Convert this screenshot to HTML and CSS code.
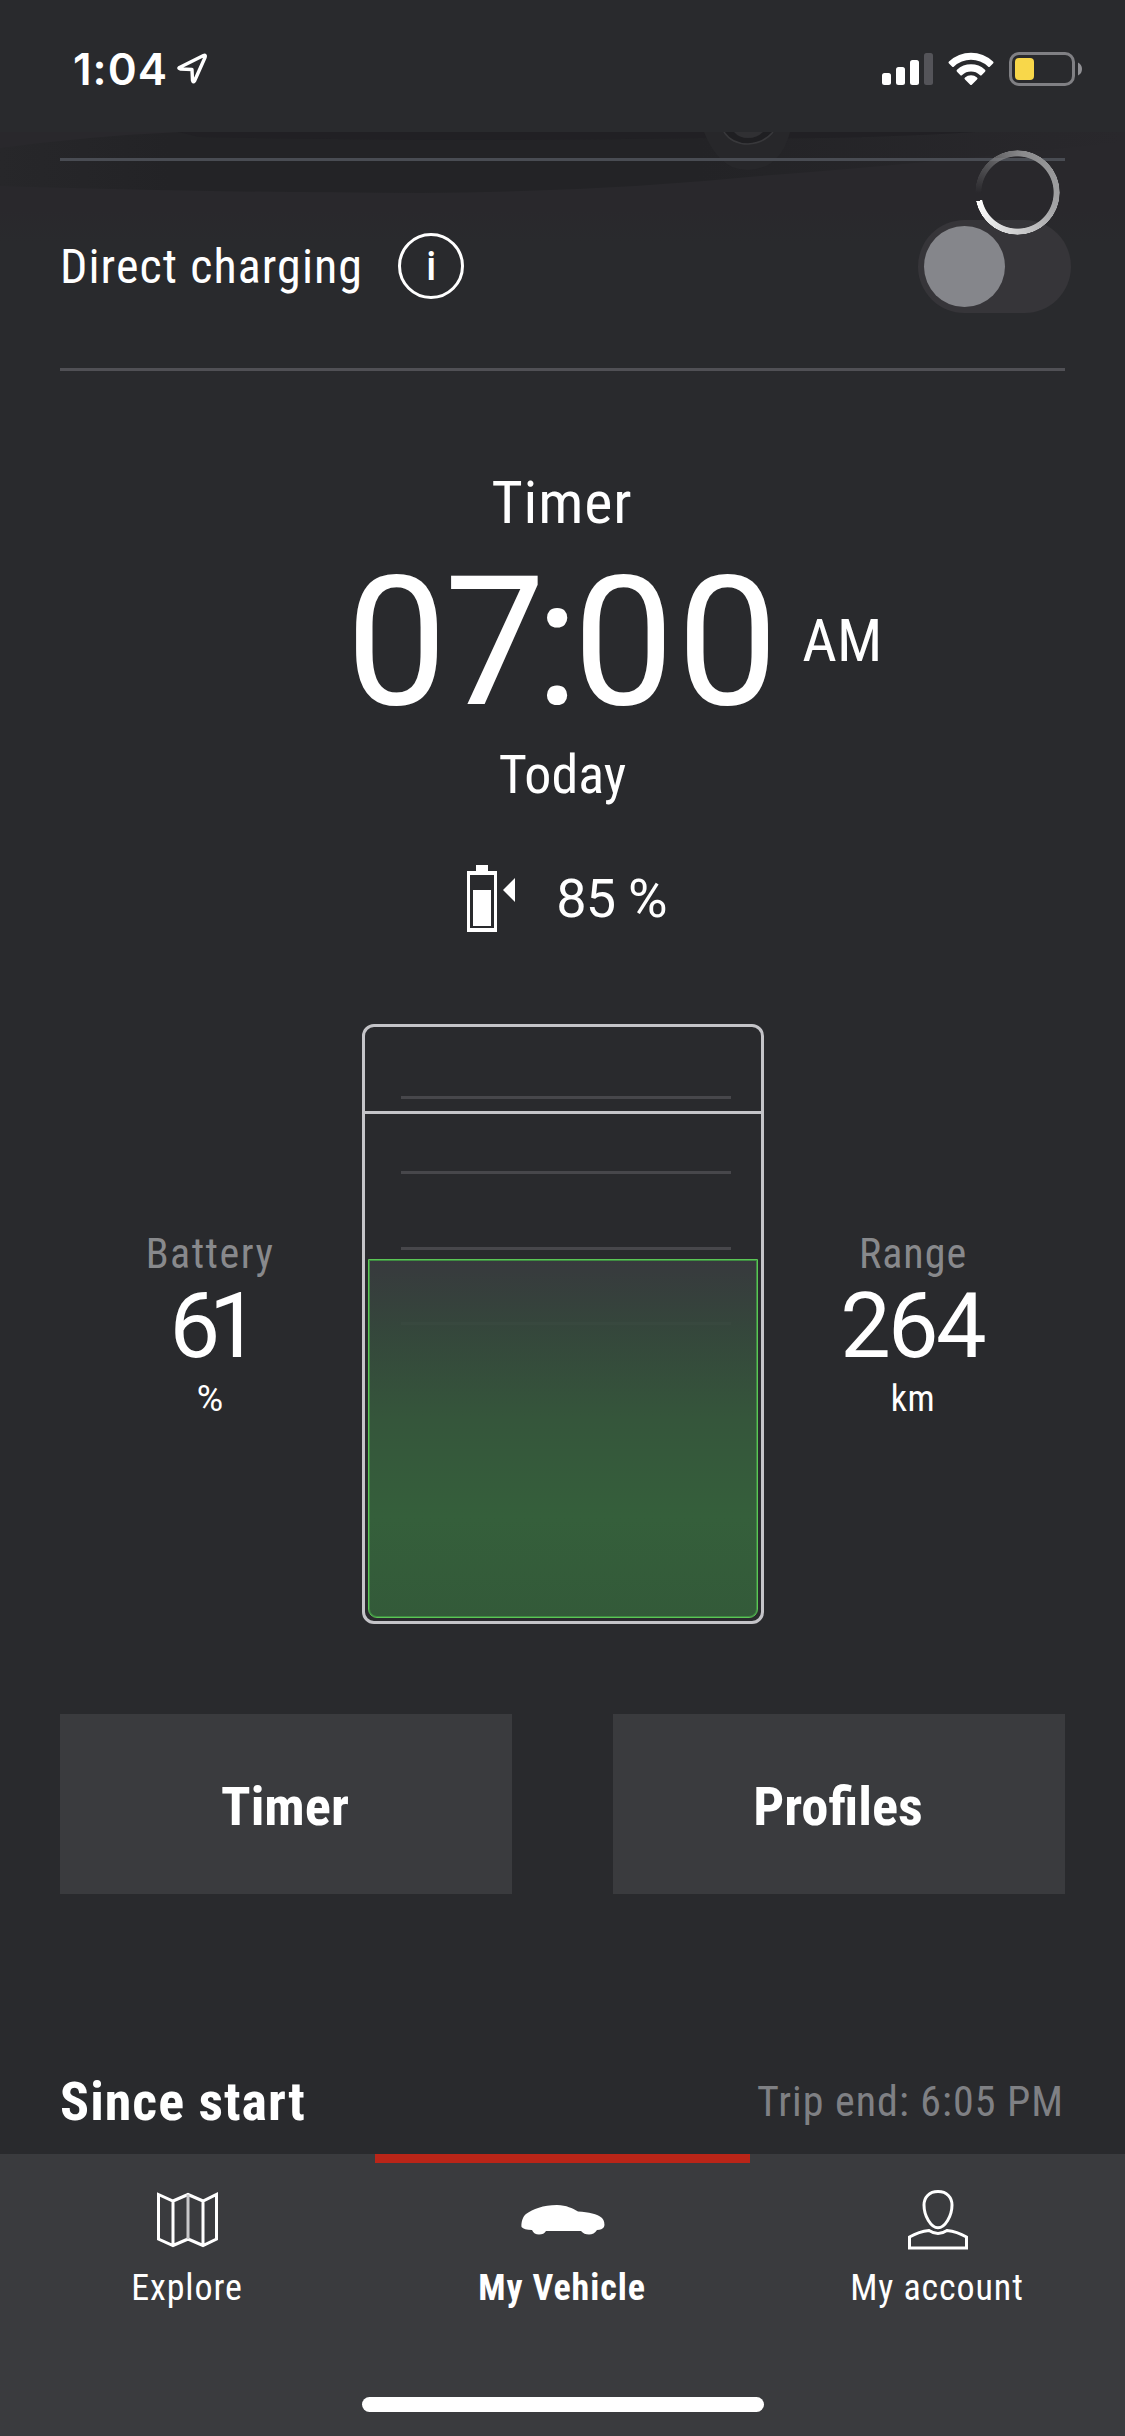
FILE: index.html
```
<!DOCTYPE html>
<html lang="en">
<head>
<meta charset="utf-8">
<title>My Vehicle</title>
<link rel="stylesheet" href="styles.css">
</head>
<body>
<div class="screen">
  <header class="status">
    <div class="status-left">
      <span class="clock">1:04</span>
      <svg class="location" width="32" height="32" viewBox="0 0 32 32"><path d="M2.500 14.500 26.500 2.500 Q29 1.500 28 4.500 L17.500 28 Q16 30 15.500 27.500 L15 16.500 3.500 16 Q1 15.500 2.500 14.500Z" fill="none" stroke="#fff" stroke-width="3.400" stroke-linejoin="round"/></svg>
    </div>
    <div class="status-right">
      <svg class="signal" width="51" height="34" viewBox="0 0 51 34"><g fill="#fff"><rect x="0" y="21" width="9" height="12" rx="2.500"/><rect x="14" y="15" width="9" height="18" rx="2.500"/><rect x="28" y="8" width="9" height="25" rx="2.500"/></g><rect x="42" y="1" width="9" height="32" rx="2.500" fill="#545459"/></svg>
      <svg class="wifi" width="46" height="34" viewBox="0 0 46 34"><g fill="#fff"><path d="M1 9.500a32 32 0 0 1 44 0q1 1 0 2l-3 3q-1 1-2 0a25 25 0 0 0-34 0q-1 1-2 0l-3-3q-1-1 0-2Z"/><path d="M9 17.700a20.500 20.500 0 0 1 28 0q1 1 0 2l-3.200 3.200q-1 1-2 0a13 13 0 0 0-17.600 0q-1 1-2 0L9 19.700q-1-1 0-2Z"/><path d="M17 25.500a9 9 0 0 1 12 0q1.200 1 0 2l-5 5q-1 1-2 0l-5-5q-1.200-1 0-2Z"/></g></svg>
      <svg class="phone-battery" width="73" height="34" viewBox="0 0 73 34"><rect x="1.500" y="1.500" width="63" height="31" rx="8.500" fill="none" stroke="#808084" stroke-width="3"/><path d="M69 10.500q4 2 4 6.500t-4 6.500Z" fill="#909094"/><rect x="6" y="6" width="19" height="22" rx="4" fill="#f8d74a"/></svg>
    </div>
  </header>

  <main class="content">
    <svg class="shadow" width="1125" height="110" viewBox="0 0 1125 110">
      <defs>
        <linearGradient id="haze" x1="0" y1="0" x2="0" y2="1"><stop offset="0" stop-color="#29282c"/><stop offset=".7" stop-color="#29282c"/><stop offset="1" stop-color="#292a2d"/></linearGradient>
        <linearGradient id="floor" x1="0" y1="0" x2="1" y2="0"><stop offset="0" stop-color="#27272a"/><stop offset=".15" stop-color="#232326"/><stop offset=".62" stop-color="#232326"/><stop offset="1" stop-color="#29282c"/></linearGradient>
      </defs>
      <rect width="1125" height="110" fill="url(#haze)"/>
      <path d="M0 16Q90 4 180 0H1125V10Q900 34 760 44Q600 60 420 61Q180 60 0 54Z" fill="url(#floor)"/>
      <path d="M178 0H975Q850 8 700 6Q440 10 200 5Z" fill="#212024"/>
      <path d="M704 0Q714 26 732 35Q750 42 768 33Q784 24 790 0Z" fill="#27272a"/>
      <path d="M724 0Q732 12 748 12Q764 11 773 0" fill="#1f1f22" stroke="#38383b" stroke-width="1.500"/>
      <path d="M734 0Q739 6 748 6Q757 6 763 0" fill="#303033"/>
    </svg>

    <section class="direct">
      <span class="direct-label">Direct charging</span>
      <span class="info">i</span>
      <span class="toggle"><span class="knob"></span></span>
      <span class="spinner"></span>
    </section>

    <section class="timer">
      <h2 class="timer-title">Timer</h2>
      <div class="timer-row"><span class="time"><span class="hour">0</span><span class="seven">7</span><span class="colon">:</span>00</span><span class="ampm">AM</span></div>
      <p class="day">Today</p>
      <div class="target">
        <svg width="48" height="67" viewBox="0 0 48 67" fill="#fff"><path d="M9 0h12v6h9v61H0V6h9ZM3 10v53h24V10Z" fill-rule="evenodd"/><rect x="6" y="25" width="18" height="36"/><path d="M48 13v24L36 25Z"/></svg>
        <span class="target-value">85 %</span>
      </div>
    </section>

    <section class="charge">
      <div class="stat">
        <span class="stat-label battery-label">Battery</span>
        <span class="stat-value narrow">61</span>
        <span class="stat-unit">%</span>
      </div>
      <div class="gauge">
        <div class="tick"></div><div class="tick"></div><div class="tick"></div><div class="tick"></div>
        <div class="limit"></div>
        <div class="fill"></div>
      </div>
      <div class="stat">
        <span class="stat-label">Range</span>
        <span class="stat-value">264</span>
        <span class="stat-unit km">km</span>
      </div>
    </section>

    <section class="actions">
      <button class="action">Timer</button>
      <button class="action">Profiles</button>
    </section>

    <section class="trip">
      <h3 class="trip-title">Since start</h3>
      <span class="trip-end">Trip end: 6:05 PM</span>
    </section>
  </main>

  <nav class="tabs">
    <div class="tab">
      <svg class="tab-icon" width="100" height="66" viewBox="0 0 100 66" fill="none" stroke="#fff" stroke-width="3"><path d="M20.500 6.500 35 13 50 6.500 65 13 78.500 6.500V51L65 57.500 50 51 35 57.500 20.500 51ZM35 13V57M65 13V57"/><path d="M50 6.500V51" stroke="#c8c8ca"/></svg>
      <span class="tab-label">Explore</span>
    </div>
    <div class="tab active">
      <svg class="tab-icon" width="100" height="66" viewBox="0 0 100 66"><path d="M8.500 39C8 34 10 28 13 26C20 21 30 17 44 17C54 17.500 59 20 65 23.500C76 24 84 26 89 30Q92.500 34 91 39Q89 42 84 42Q81 46.500 76 46.500Q71 46.500 68 43H33Q31 46.500 26 46.500Q21 46.500 19 42Q11 42 8.500 39Z" fill="#fff"/></svg>
      <span class="tab-label">My Vehicle</span>
    </div>
    <div class="tab">
      <svg class="tab-icon" width="100" height="66" viewBox="0 0 100 66" fill="none" stroke="#fff" stroke-width="3"><path d="M50 3.500C59 3.500 64 9.500 64 17C64 28 57 39.800 50 39.800S36 28 36 17C36 9.500 41 3.500 50 3.500Z"/><path d="M21.500 60V49Q31 43.500 41 42.500Q50 48.500 59 42.500Q69 43.500 78.500 49V60Z"/></svg>
      <span class="tab-label">My account</span>
    </div>
  </nav>
  <div class="home"></div>
</div>
</body>
</html>
```
FILE: styles.css
```
* { box-sizing: border-box; margin: 0; padding: 0; }

body {
  width: 1125px;
  background: #292a2d;
  color: #fff;
  font-family: Roboto, "Liberation Sans", sans-serif;
  font-stretch: 75%;
}

.screen { display: flex; flex-direction: column; height: 2436px; position: relative; overflow: hidden; }

.status { display: flex; justify-content: space-between; height: 132px; padding: 0 43px 0 73px; }
.status-left { display: flex; align-items: flex-start; }
.clock { font: 600 44px/52px Inter, "Liberation Sans", sans-serif; letter-spacing: 1px; margin-top: 43px; }
.location { margin: 53px 0 0 9px; }
.status-right { display: flex; align-items: flex-start; padding-top: 52px; }
.wifi { margin: 0 15px; }

.content { position: relative; flex: 1; display: flex; flex-direction: column; padding: 26px 60px 0; }
.shadow { position: absolute; left: 0; top: 0; }

.direct {
  position: relative;
  display: flex;
  align-items: center;
  height: 213px;
  padding-top: 3px;
  border-top: 3px solid #494c53;
  border-bottom: 3px solid #505055;
}
.direct-label { font-size: 48px; letter-spacing: 1.1px; }
.info {
  width: 66px;
  height: 66px;
  margin-left: 35px;
  border: 3px solid #fff;
  border-radius: 50%;
  font-size: 41px;
  font-weight: 500;
  line-height: 61px;
  text-align: center;
}
.toggle { width: 153px; height: 93px; margin: 1px -6px 0 auto; padding: 6px; border-radius: 47px; background: #363539; }
.knob { display: block; width: 81px; height: 81px; border-radius: 50%; background: #85868b; }
.spinner {
  position: absolute;
  left: 915px;
  top: -11px;
  width: 85px;
  height: 85px;
  border-radius: 50%;
  background: conic-gradient(from 258deg, rgba(255, 255, 255, 0) 3%, #8a8a8c 30%, #a4a4a6 60%, #fff 100%);
  mask: radial-gradient(closest-side, transparent 84%, #000 86%, #000 98.500%, transparent);
}

.timer { display: flex; flex-direction: column; align-items: center; height: 653px; }
.timer-title { margin-top: 95px; margin-right: 1px; font-size: 60px; font-weight: 400; line-height: 74px; letter-spacing: .9px; }
.timer-row { display: flex; align-items: center; width: 100%; height: 180px; margin-top: 10px; padding-left: 286px; }
.time { position: relative; top: 3px; font-size: 180px; font-stretch: 100%; letter-spacing: 3px; line-height: 180px; }
.hour { letter-spacing: -3px; }
.seven { letter-spacing: -10px; }
.colon { letter-spacing: -6px; }
.ampm { margin-left: 21px; font-size: 60px; letter-spacing: .2px; }
.day { margin-top: 12px; line-height: 66px; font-size: 54px; letter-spacing: 0; }
.target { display: flex; align-items: center; margin: 56px 0 0 9px; gap: 41px; }
.target-value { padding-top: 1px; font-size: 54px; font-stretch: 100%; letter-spacing: -.8px; line-height: 67px; }

.charge { display: flex; margin: 0 -60px; height: 600px; }
.stat { display: flex; flex-direction: column; align-items: center; width: 300px; padding-top: 203px; }
.stat:first-child { margin: 0 2px 0 60px; }
.stat:last-child { margin-left: -1px; }
.stat-label { color: #88898c; font-size: 42px; line-height: 54px; letter-spacing: 1px; }
.battery-label { letter-spacing: 1.5px; }
.stat-value { margin-right: 2px; font-size: 90px; font-stretch: 100%; line-height: 91px; letter-spacing: -2.800px; }
.stat-value.narrow { letter-spacing: -11px; }
.stat-unit { font-size: 36px; font-stretch: 100%; line-height: 54px; }
.stat-unit.km { font-stretch: 75%; letter-spacing: .5px; }

.gauge { position: relative; width: 402px; height: 600px; border: 3px solid #c4c4c8; border-radius: 12px; padding: 69px 30px 0 36px; }
.tick { height: 3px; margin-bottom: 72.400px; background: #47474b; }
.limit { position: absolute; left: 0; right: 0; top: 84px; height: 3px; background: #c4c4c8; }
.fill {
  position: absolute;
  left: 3px;
  right: 3px;
  bottom: 3px;
  height: 359px;
  border: 1px solid #5bc656;
  border-radius: 0 0 9px 9px;
  background: linear-gradient(rgba(57, 59, 63, .9), rgba(54, 74, 61, .9) 20%, #35563b 45%, #355f3b 72%, #335a39);
  box-shadow: inset 0 0 0 1px #3f8b42;
}

.actions { display: flex; justify-content: space-between; margin-top: 90px; }
.action { width: 452px; height: 180px; border: 0; background: #3a3b3e; color: #fff; font: inherit; font-size: 54.500px; font-weight: 700; font-stretch: 75%; padding: 3px 2px 0 0; }

.trip { display: flex; justify-content: space-between; align-items: center; height: 66px; margin-top: 174px; }
.trip-title { font-size: 54px; font-weight: 700; letter-spacing: 1px; }
.trip-end { margin-right: 1px; color: #7f8084; font-size: 42px; letter-spacing: 1px; }

.tabs { display: flex; height: 282px; background: #3a3b3e; }
.tab { flex: 1; display: flex; flex-direction: column; align-items: center; padding-top: 34px; border-top: 0 solid #ba2518; }
.tab.active { padding-top: 25px; border-top-width: 9px; font-weight: 700; }
.tab-label { margin: 12px 1px 0 0; font-size: 36px; line-height: 44px; letter-spacing: .9px; }
.home { position: absolute; left: 362px; bottom: 24px; width: 402px; height: 15px; border-radius: 8px; background: #fff; }
```
